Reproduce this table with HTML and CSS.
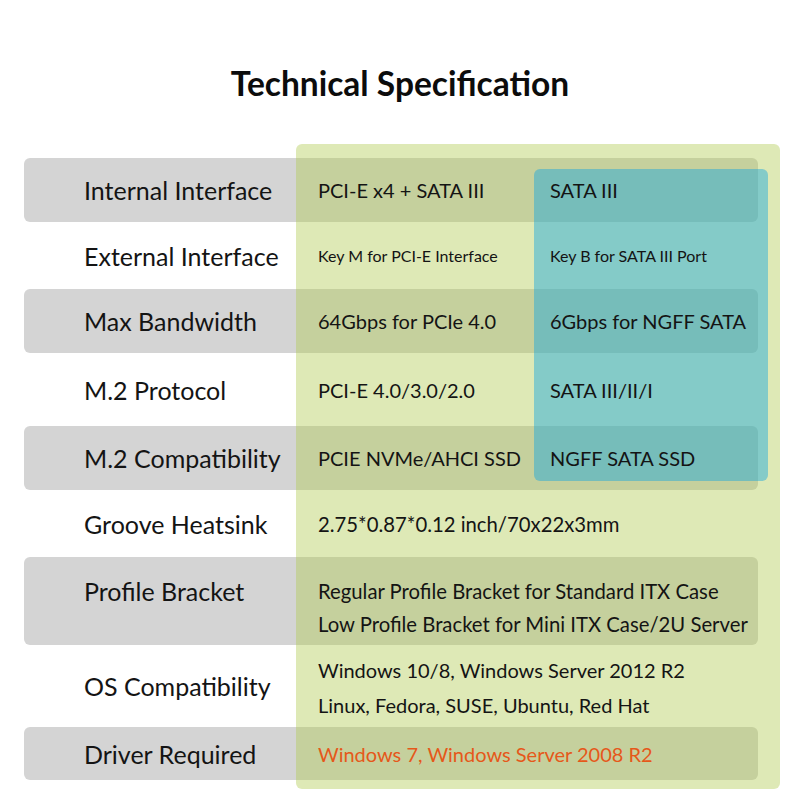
FILE: index.html
```html
<!DOCTYPE html>
<html>
<head>
<meta charset="utf-8">
<link rel="stylesheet" href="styles.css">
</head>
<body>
<div class="page">
  <h1 class="title">Technical Specification</h1>
  <div class="spec">
    <div class="panel-green"></div>
    <div class="panel-teal"></div>
    <div class="row shade r1">
      <div class="label">Internal Interface</div>
      <div class="val">PCI-E x4 + SATA III</div>
      <div class="val">SATA III</div>
    </div>
    <div class="row r2">
      <div class="label">External Interface</div>
      <div class="val small">Key M for PCI-E Interface</div>
      <div class="val small">Key B for SATA III Port</div>
    </div>
    <div class="row shade r3">
      <div class="label">Max Bandwidth</div>
      <div class="val">64Gbps for PCIe 4.0</div>
      <div class="val">6Gbps for NGFF SATA</div>
    </div>
    <div class="row r4">
      <div class="label">M.2 Protocol</div>
      <div class="val">PCI-E 4.0/3.0/2.0</div>
      <div class="val">SATA III/II/I</div>
    </div>
    <div class="row shade r5">
      <div class="label">M.2 Compatibility</div>
      <div class="val">PCIE NVMe/AHCI SSD</div>
      <div class="val">NGFF SATA SSD</div>
    </div>
    <div class="row r6">
      <div class="label">Groove Heatsink</div>
      <div class="val span wide">2.75*0.87*0.12 inch/70x22x3mm</div>
    </div>
    <div class="row shade r7">
      <div class="label top">Profile Bracket</div>
      <div class="val span wide lines tight">
        <span>Regular Profile Bracket for Standard ITX Case</span>
        <span>Low Profile Bracket for Mini ITX Case/2U Server</span>
      </div>
    </div>
    <div class="row r8">
      <div class="label">OS Compatibility</div>
      <div class="val span lines loose">
        <span>Windows 10/8, Windows Server 2012 R2</span>
        <span>Linux, Fedora, SUSE, Ubuntu, Red Hat</span>
      </div>
    </div>
    <div class="row shade r9">
      <div class="label">Driver Required</div>
      <div class="val span orange">Windows 7, Windows Server 2008 R2</div>
    </div>
  </div>
</div>
</body>
</html>
```

FILE: styles.css
```css
html, body {
  margin: 0;
  padding: 0;
  background: #ffffff;
}

body {
  font-family: Lato, "Open Sans", sans-serif;
  color: #141414;
}

.page {
  width: 800px;
  height: 800px;
  display: flex;
  flex-direction: column;
  box-sizing: border-box;
  padding-top: 63px;
}

.title {
  margin: 0;
  text-align: center;
  font-size: 33.5px;
  font-weight: 700;
  line-height: 40px;
  color: #0c0c0c;
}

.spec {
  position: relative;
  margin: 55px 42px 0 24px;
  display: flex;
  flex-direction: column;
}

.panel-green {
  position: absolute;
  left: 272px;
  top: -14px;
  width: 484px;
  height: 645px;
  border-radius: 6px;
  background: rgba(176, 203, 81, 0.42);
  z-index: 1;
}

.panel-teal {
  position: absolute;
  left: 510px;
  top: 11px;
  width: 234px;
  height: 312px;
  border-radius: 6px;
  background: rgba(22, 166, 222, 0.45);
  z-index: 1;
}

.row {
  display: grid;
  grid-template-columns: 294px 232px 1fr;
  align-items: center;
  border-radius: 6px;
}

.shade {
  background: #d4d4d4;
}

.r1 { height: 64px; }
.r2 { height: 67px; }
.r3 { height: 64px; }
.r4 { height: 73px; }
.r5 { height: 64px; }
.r6 { height: 67px; }
.r7 { height: 88px; }
.r8 { height: 82px; }
.r9 { height: 53px; }

.label {
  position: relative;
  z-index: 2;
  padding-left: 60px;
  font-size: 25px;
  line-height: 30px;
}

.label.top {
  align-self: start;
  padding-top: 19px;
}

.val {
  position: relative;
  z-index: 2;
  font-size: 20px;
  line-height: 30px;
}

.val.small {
  font-size: 16px;
}

.val.wide {
  font-size: 20.3px;
}

.val.span {
  grid-column: 2 / 4;
}

.lines {
  display: flex;
  flex-direction: column;
  align-self: start;
}

.lines.tight {
  line-height: 33px;
  padding-top: 18px;
}

.lines.loose {
  line-height: 35px;
  padding-top: 8px;
}

.orange {
  color: #e5581a;
}
```
